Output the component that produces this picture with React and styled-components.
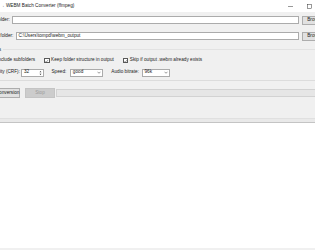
import React from 'react';
import styled, { createGlobalStyle } from 'styled-components';

const GlobalStyle = createGlobalStyle`
  html, body {
    margin: 0;
    padding: 0;
    background: #f0f0f0;
    overflow: hidden;
  }
  body {
    width: 315px;
    height: 250px;
    font-family: "Liberation Sans", Arial, sans-serif;
  }
`;

const Window = styled.div`
  width: 356px;
  height: 250px;
  margin-left: -19px;
  display: flex;
  flex-direction: column;
  background: #f0f0f0;
  color: #1a1a1a;
  font-size: 4.7px;
  line-height: 1;
`;

const TitleBar = styled.div`
  height: 12px;
  display: flex;
  align-items: center;
  background: #ffffff;
  flex-shrink: 0;
`;

const Title = styled.div`
  flex: 1;
  padding-left: 8px;
  white-space: nowrap;
`;

const CaptionButton = styled.div`
  width: 18.5px;
  height: 12px;
  display: flex;
  align-items: center;
  justify-content: center;
`;

const Content = styled.div`
  padding: 4px 5px 0 4px;
  display: flex;
  flex-direction: column;
`;

const FieldRow = styled.div`
  display: flex;
  align-items: center;
  height: 8.5px;
  margin-bottom: ${p => p.$gap || 0}px;
`;

const Label = styled.span`
  white-space: nowrap;
  margin-right: ${p => p.$mr || 2.5}px;
`;

const Entry = styled.div`
  flex: 1;
  height: 8px;
  box-sizing: border-box;
  background: #fff;
  border: 1px solid #ababab;
  display: flex;
  align-items: center;
  padding-left: 1.5px;
  white-space: nowrap;
`;

const Button = styled.div`
  height: ${p => p.$h || 8.5}px;
  width: ${p => p.$w}px;
  box-sizing: border-box;
  background: ${p => (p.$disabled ? '#cccccc' : '#e1e1e1')};
  border: 1px solid ${p => (p.$disabled ? '#c4c4c4' : '#adadad')};
  color: ${p => (p.$disabled ? '#9a9a9a' : '#1a1a1a')};
  display: flex;
  align-items: center;
  justify-content: center;
  white-space: nowrap;
  margin-left: ${p => p.$ml || 0}px;
  flex-shrink: 0;
`;

const Group = styled.div`
  position: relative;
  margin-top: 8.5px;
  border-top: 1px solid #e2e2e2;
  border-bottom: 1px solid #dcdcdc;
  padding: 7.5px 4px 2.5px 5px;
  display: flex;
  flex-direction: column;
`;

const GroupTitle = styled.span`
  position: absolute;
  top: -2.5px;
  left: 0;
  background: #f0f0f0;
  padding-right: 2px;
  white-space: nowrap;
`;

const CheckRow = styled.div`
  display: flex;
  align-items: center;
  height: 6px;
  margin-bottom: 5px;
`;

const Check = styled.label`
  display: flex;
  align-items: center;
  white-space: nowrap;
  margin-right: 9px;
`;

const Box = styled.span`
  width: 5.5px;
  height: 5.5px;
  box-sizing: border-box;
  border: 1px solid #5a5a5a;
  background: #fff;
  margin-right: 1.5px;
  display: flex;
  align-items: center;
  justify-content: center;
`;

const SettingsRow = styled.div`
  display: flex;
  align-items: center;
  height: 8.5px;
`;

const Field = styled.div`
  width: ${p => p.$w}px;
  height: 8px;
  box-sizing: border-box;
  background: #fff;
  border: 1px solid #ababab;
  display: flex;
  align-items: center;
  justify-content: space-between;
  padding: 0 1px 0 1.5px;
  margin-right: ${p => p.$mr || 0}px;
  flex-shrink: 0;
`;

const ActionRow = styled.div`
  display: flex;
  align-items: center;
  margin-top: 7.5px;
  height: 10px;
`;

const Progress = styled.div`
  flex: 1;
  height: 8px;
  box-sizing: border-box;
  background: #e6e6e6;
  border: 1px solid #d2d2d2;
  margin-left: 1px;
`;

const LogFrame = styled.div`
  margin-top: 19.5px;
  border-top: 1px solid #e0e0e0;
  padding-top: 3px;
  background: #e9e9e9;
  display: flex;
  flex-direction: column;
`;

const LogText = styled.div`
  height: 125px;
  background: #fff;
  border-top: 1px solid #c4c4c4;
`;

const Chevron = () => (
  <svg width="4" height="3" viewBox="0 0 8 5">
    <path d="M1 1 L4 4 L7 1" fill="none" stroke="#555" strokeWidth="1.2" />
  </svg>
);

const Spin = () => (
  <svg width="3" height="6" viewBox="0 0 6 12">
    <path d="M1 4.5 L3 2 L5 4.5 Z M1 7.5 L3 10 L5 7.5 Z" fill="#333" />
  </svg>
);

const Tick = () => (
  <svg width="4" height="4" viewBox="0 0 8 8">
    <path d="M1 4.2 L3.2 6.4 L7 1.6" fill="none" stroke="#333" strokeWidth="1" />
  </svg>
);

export default function App() {
  return (
    <>
      <GlobalStyle />
      <Window>
        <TitleBar>
          <Title>MP4 → WEBM Batch Converter (ffmpeg)</Title>
          <CaptionButton>
            <svg width="5" height="1" viewBox="0 0 10 2">
              <rect x="0" y="0.5" width="10" height="1" fill="#333" />
            </svg>
          </CaptionButton>
          <CaptionButton>
            <svg width="5" height="5" viewBox="0 0 10 10">
              <rect x="1" y="1" width="8" height="8" fill="none" stroke="#333" strokeWidth="1" />
            </svg>
          </CaptionButton>
          <CaptionButton>
            <svg width="5" height="5" viewBox="0 0 10 10">
              <path d="M1 1 L9 9 M9 1 L1 9" stroke="#333" strokeWidth="1" />
            </svg>
          </CaptionButton>
        </TitleBar>
        <Content>
          <FieldRow $gap={7.5}>
            <Label>Input folder:</Label>
            <Entry />
            <Button $w={30} $ml={3}>Browse...</Button>
          </FieldRow>
          <FieldRow>
            <Label>Output folder:</Label>
            <Entry>C:\Users\tompd\webm_output</Entry>
            <Button $w={30} $ml={3}>Browse...</Button>
          </FieldRow>
          <Group>
            <GroupTitle>Options</GroupTitle>
            <CheckRow>
              <Check><Box><Tick /></Box>Include subfolders</Check>
              <Check><Box><Tick /></Box>Keep folder structure in output</Check>
              <Check><Box><Tick /></Box>Skip if output .webm already exists</Check>
            </CheckRow>
            <SettingsRow>
              <Label $mr={1.5}>Quality (CRF):</Label>
              <Field $w={23} $mr={7}>32<Spin /></Field>
              <Label $mr={4}>Speed:</Label>
              <Field $w={33} $mr={8}>good<Chevron /></Field>
              <Label $mr={3}>Audio bitrate:</Label>
              <Field $w={28}>96k<Chevron /></Field>
            </SettingsRow>
          </Group>
          <ActionRow>
            <Button $w={35} $h={9.5}>Start conversion</Button>
            <Button $w={30} $h={9.5} $ml={5} $disabled>Stop</Button>
            <Progress />
          </ActionRow>
          <LogFrame>
            <LogText />
          </LogFrame>
        </Content>
      </Window>
    </>
  );
}
